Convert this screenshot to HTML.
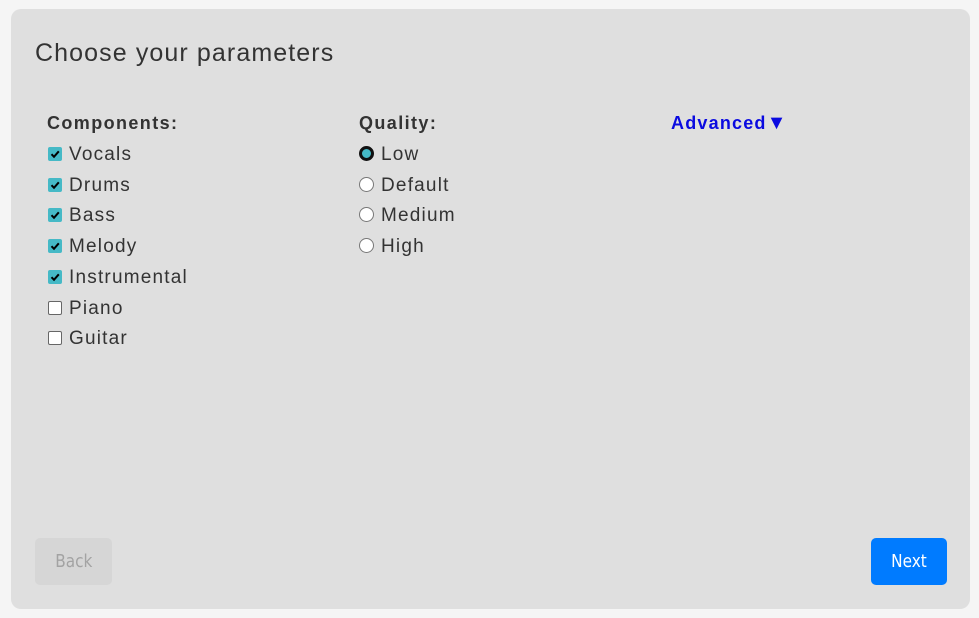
<!DOCTYPE html>
<html><head><style>
html,body{margin:0;padding:0;}
body{width:979px;height:618px;background:#f5f5f5;position:relative;overflow:hidden;font-family:"Liberation Sans",sans-serif;color:#333;}
.card{position:absolute;left:11px;top:9px;width:959px;height:600px;background:#dfdfdf;border-radius:10px;}
.t{position:absolute;white-space:nowrap;}
h1{position:absolute;left:35px;top:38px;margin:0;font-weight:normal;font-size:25px;letter-spacing:1.1px;color:#333;line-height:30px;}
.hd{font-weight:bold;font-size:18px;letter-spacing:1.4px;color:#333;line-height:22px;}
.it{font-size:19px;letter-spacing:1.2px;line-height:22px;color:#333;}
.cb{position:absolute;width:14px;height:14px;border-radius:2px;box-sizing:border-box;}
.cb.on{background:#45b9c6;}
.cb.off{background:#fff;border:1.5px solid #666;}
.rd{position:absolute;width:15px;height:15px;border-radius:50%;box-sizing:border-box;}
.rd.off{background:#fff;border:1.5px solid #777;}
.rd.on{background:#45b9c6;border:3px solid #111;}
.btn{position:absolute;border-radius:5px;font-family:"DejaVu Sans",sans-serif;font-size:18px;text-align:center;line-height:48px;}
</style></head><body>
<div class="card"></div>
<h1>Choose your parameters</h1>
<div class="t hd" style="left:47px;top:112px">Components:</div>
<div class="t hd" style="left:359px;top:112px">Quality:</div>
<div class="t hd" style="left:671px;top:112px;color:#0a0ae0;letter-spacing:1.2px">Advanced<span style="font-size:20px">&#9660;</span></div>

<div class="cb on" style="left:48px;top:147px"><svg width="14" height="14"><path d="M3.5 7.2 L6 9.8 L10.8 4.3" fill="none" stroke="#000" stroke-width="2"/></svg></div>
<div class="t it" style="left:69px;top:144px">Vocals</div>
<div class="cb on" style="left:48px;top:178px"><svg width="14" height="14"><path d="M3.5 7.2 L6 9.8 L10.8 4.3" fill="none" stroke="#000" stroke-width="2"/></svg></div>
<div class="t it" style="left:69px;top:175px">Drums</div>
<div class="cb on" style="left:48px;top:208px"><svg width="14" height="14"><path d="M3.5 7.2 L6 9.8 L10.8 4.3" fill="none" stroke="#000" stroke-width="2"/></svg></div>
<div class="t it" style="left:69px;top:205px">Bass</div>
<div class="cb on" style="left:48px;top:239px"><svg width="14" height="14"><path d="M3.5 7.2 L6 9.8 L10.8 4.3" fill="none" stroke="#000" stroke-width="2"/></svg></div>
<div class="t it" style="left:69px;top:236px">Melody</div>
<div class="cb on" style="left:48px;top:270px"><svg width="14" height="14"><path d="M3.5 7.2 L6 9.8 L10.8 4.3" fill="none" stroke="#000" stroke-width="2"/></svg></div>
<div class="t it" style="left:69px;top:267px">Instrumental</div>
<div class="cb off" style="left:48px;top:301px"></div>
<div class="t it" style="left:69px;top:298px">Piano</div>
<div class="cb off" style="left:48px;top:331px"></div>
<div class="t it" style="left:69px;top:328px">Guitar</div>

<div class="rd on" style="left:359px;top:146px"></div>
<div class="t it" style="left:381px;top:144px">Low</div>
<div class="rd off" style="left:359px;top:177px"></div>
<div class="t it" style="left:381px;top:175px">Default</div>
<div class="rd off" style="left:359px;top:207px"></div>
<div class="t it" style="left:381px;top:205px">Medium</div>
<div class="rd off" style="left:359px;top:238px"></div>
<div class="t it" style="left:381px;top:236px">High</div>

<div class="btn" style="left:35px;top:538px;width:77px;height:47px;background:#d6d6d6;color:#a3a3a3"><span style="display:inline-block;transform:scaleX(0.85)">Back</span></div>
<div class="btn" style="left:871px;top:538px;width:76px;height:47px;background:#007bff;color:#fff"><span style="display:inline-block;transform:scaleX(0.85)">Next</span></div>
</body></html>
